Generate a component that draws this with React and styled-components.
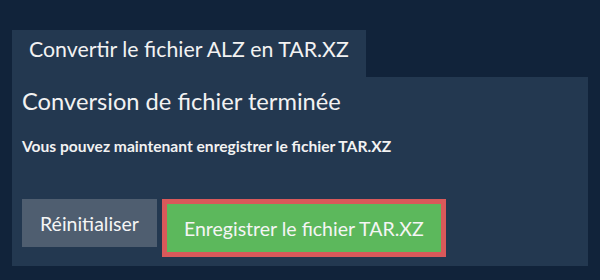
import styled, { createGlobalStyle } from 'styled-components';

const GlobalStyle = createGlobalStyle`
  body {
    margin: 0;
    background: #11233a;
    font-family: Lato, "Open Sans", sans-serif;
    color: #f2f2f2;
  }
`;

const Page = styled.div`
  padding: 30px 12px 0;
`;

const Tab = styled.div`
  display: inline-block;
  box-sizing: border-box;
  height: 47px;
  padding: 7px 17px 0;
  background: #233850;
  font-size: 21.3px;
  line-height: 1.2;
`;

const Panel = styled.div`
  background: #233850;
  padding: 10px 10px 9px;
`;

const Title = styled.h2`
  margin: 0;
  font-size: 23.7px;
  font-weight: normal;
  line-height: 1.2;
`;

const Message = styled.p`
  margin: 22px 0 0;
  font-size: 15.6px;
  font-weight: bold;
  line-height: 1.2;
`;

const Actions = styled.div`
  display: flex;
  align-items: flex-start;
  gap: 5px;
  margin-top: 43px;
`;

const Button = styled.button`
  box-sizing: content-box;
  height: 48px;
  padding: 0 ${({ $primary }) => ($primary ? '17px' : '18px')};
  border: ${({ $primary }) => ($primary ? '5px solid #d9595a' : 'none')};
  background: ${({ $primary }) => ($primary ? '#5cb85c' : '#4f5e70')};
  color: #f5f5f5;
  font-family: Lato, "Open Sans", sans-serif;
  font-size: 19.5px;
  cursor: pointer;
`;

export default function App() {
  return (
    <>
      <GlobalStyle />
      <Page>
        <Tab>Convertir le fichier ALZ en TAR.XZ</Tab>
        <Panel>
          <Title>Conversion de fichier terminée</Title>
          <Message>Vous pouvez maintenant enregistrer le fichier TAR.XZ</Message>
          <Actions>
            <Button type="button">Réinitialiser</Button>
            <Button type="button" $primary>Enregistrer le fichier TAR.XZ</Button>
          </Actions>
        </Panel>
      </Page>
    </>
  );
}
